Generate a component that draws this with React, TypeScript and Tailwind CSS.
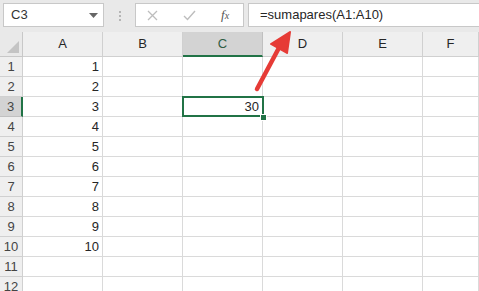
const font = { fontFamily: '"Liberation Sans", Arial, sans-serif' };

const cols = ['A', 'B', 'C', 'D', 'E', 'F'];
const rows = Array.from({ length: 12 }, (_, i) => i + 1);

function Arrow() {
  return (
    <svg className="absolute left-0 top-0 pointer-events-none z-20" width="479" height="291">
      <line x1="257" y1="89" x2="281" y2="44" stroke="#e63b36" strokeWidth="4.5" strokeLinecap="round" />
      <polygon points="290,32 271,44 287,53" fill="#e63b36" stroke="#e63b36" strokeWidth="2" strokeLinejoin="round" />
    </svg>
  );
}

export default function App() {
  return (
    <div className="relative w-[479px] h-[291px] overflow-hidden bg-white text-[13px] text-[#262626]" style={font}>
      {/* formula bar */}
      <div className="flex h-[32px] bg-[#e9e9e9] pt-[3px] pl-[3px]">
        <div className="flex w-[101px] h-[24px] items-center justify-between bg-white border border-[#c8c8c8] pl-[7px] pr-[5px]">
          <span className="text-[#333]">C3</span>
          <svg width="9" height="5" viewBox="0 0 9 5"><polygon points="0,0 9,0 4.5,5" fill="#666" /></svg>
        </div>
        <div className="flex w-[31px] flex-col items-center justify-center gap-[2px] pb-[3px]">
          <div className="w-[2px] h-[2px] bg-[#b5b5b5]" />
          <div className="w-[2px] h-[2px] bg-[#b5b5b5]" />
          <div className="w-[2px] h-[2px] bg-[#b5b5b5]" />
        </div>
        <div className="flex w-[109px] h-[24px] items-center bg-white border border-[#c8c8c8]">
          <svg className="ml-[11px]" width="11" height="11" viewBox="0 0 11 11">
            <path d="M1 1L10 10M10 1L1 10" stroke="#bdbdbd" strokeWidth="1.3" />
          </svg>
          <svg className="ml-[25px]" width="13" height="11" viewBox="0 0 13 11">
            <path d="M1 6L4.5 9.5L12 1" stroke="#bdbdbd" strokeWidth="1.4" fill="none" />
          </svg>
          <span className="ml-[25px] italic text-[#555] text-[13px]" style={{ fontFamily: '"Liberation Serif", serif' }}>
            f<span className="text-[10px]">x</span>
          </span>
        </div>
        <div className="flex flex-1 h-[24px] items-center bg-white border border-[#c8c8c8] border-r-0 ml-[4px] pl-[11px] text-[#262626]">
          =sumapares(A1:A10)
        </div>
      </div>

      {/* grid */}
      <div className="grid grid-cols-[23px_80px_80px_80px_80px_80px_1fr]">
        <div className="relative h-[25px] bg-[#e9e9e9] border-r border-b border-[#c8c8c8]">
          <svg className="absolute right-[3px] bottom-[3px]" width="12" height="12" viewBox="0 0 12 12">
            <polygon points="12,0 12,12 0,12" fill="#c4c4c4" />
          </svg>
        </div>
        {cols.map(c => (
          <div
            key={c}
            className={
              c === 'C'
                ? 'h-[25px] flex items-center justify-center bg-[#d3d3d3] border-r border-[#c0c0c0] border-b-2 border-b-[#217346] text-[#2f5d44]'
                : 'h-[25px] flex items-center justify-center bg-[#efefef] border-r border-b border-[#d0d0d0] text-[#262626]'
            }
          >
            {c}
          </div>
        ))}
        {rows.map(r => (
          <RowCells key={r} r={r} />
        ))}
      </div>

      <Arrow />
    </div>
  );
}

function RowCells({ r }: { r: number }) {
  const sel = r === 3;
  return (
    <>
      <div
        className={
          sel
            ? 'h-[20px] flex items-center justify-center bg-[#d3d3d3] border-b border-[#c0c0c0] border-r-2 border-r-[#217346] text-[#444]'
            : 'h-[20px] flex items-center justify-center bg-[#efefef] border-r border-b border-[#d0d0d0] text-[#444]'
        }
      >
        {r}
      </div>
      {cols.map(c => (
        <div
          key={c}
          className={
            'relative h-[20px] flex items-center justify-end pr-[3px] border-r border-b border-[#dadada]' +
            (c === 'C' && sel ? ' z-10' : '')
          }
        >
          {c === 'A' && r <= 10 ? r : null}
          {c === 'C' && sel ? (
            <>
              <span>30</span>
              <div className="absolute left-[-1px] top-[-1px] right-[-2px] bottom-[-1px] border-2 border-[#217346]" />
              <div className="absolute right-[-5px] bottom-[-5px] w-[7px] h-[7px] bg-[#217346] border border-white" />
            </>
          ) : null}
        </div>
      ))}
    </>
  );
}
